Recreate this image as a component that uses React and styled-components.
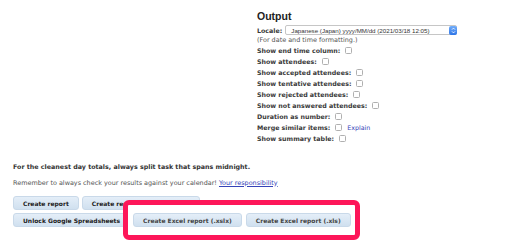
import React from "react";
import styled, { createGlobalStyle } from "styled-components";

const Global = createGlobalStyle`
  html, body { margin: 0; padding: 0; background: #fff; }
  body {
    font-family: "DejaVu Sans", Verdana, sans-serif;
    color: #333;
    width: 512px;
    height: 241px;
    overflow: hidden;
  }
`;

const Page = styled.div`
  padding-left: 13px;
`;

const Columns = styled.div`
  display: grid;
  grid-template-columns: 244px 1fr;
`;

const Section = styled.section`
  display: flex;
  flex-direction: column;
`;

const Title = styled.h3`
  margin: 10px 0 3px;
  font-family: "Liberation Sans", Arial, sans-serif;
  font-size: 10.5px;
  line-height: 12px;
  font-weight: 700;
  color: #222;
`;

const Row = styled.div`
  display: flex;
  align-items: center;
  gap: ${(p) => p.$gap ?? 5}px;
  height: ${(p) => p.$h ?? 11}px;
  font-size: 6.3px;
  font-weight: 700;
  color: #3a3a3a;
  white-space: nowrap;
`;

const Hint = styled.div`
  height: 10px;
  display: flex;
  align-items: center;
  font-size: 6.45px;
  font-weight: 400;
  color: #555;
`;

const Check = styled.input.attrs({ type: "checkbox" })`
  appearance: none;
  margin: 0;
  width: 7px;
  height: 7px;
  box-sizing: border-box;
  border: 1px solid #b0b0b0;
  border-radius: 1.5px;
  background: #fff;
`;

const Select = styled.div`
  display: flex;
  align-items: center;
  width: 172px;
  height: 10px;
  box-sizing: border-box;
  border: 1px solid #c6c6c6;
  border-radius: 2px;
  background: #fff;
  padding-left: 5px;
  font-family: "Liberation Sans", Arial, sans-serif;
  font-size: 6.2px;
  font-weight: 400;
  color: #333;
`;

const Stepper = styled.span`
  margin-left: auto;
  width: 8px;
  height: 9px;
  margin-right: -1px;
  border-radius: 2px;
  background: linear-gradient(#72aefa, #2c74e8);
  display: flex;
  align-items: center;
  justify-content: center;
`;

const Link = styled.a`
  color: #3543b8;
  font-weight: 400;
  text-decoration: ${(p) => (p.$underline ? "underline" : "none")};
  cursor: pointer;
`;

const Notes = styled.div`
  margin-top: 16.5px;
  display: flex;
  flex-direction: column;
`;

const Strong = styled.p`
  margin: 0;
  line-height: 11px;
  font-size: 6.35px;
  font-weight: 700;
  color: #333;
`;

const Muted = styled.p`
  margin: 6px 0 0;
  line-height: 11px;
  font-size: 6.45px;
  font-weight: 400;
  color: #555;
`;

const Buttons = styled.div`
  margin-top: 7.5px;
  display: flex;
  flex-direction: column;
  gap: 3px;
`;

const ButtonRow = styled.div`
  display: flex;
  align-items: center;
  gap: 3px;
`;

const Button = styled.button`
  height: 14px;
  padding: 0 9px;
  border: 1px solid #c9d9e9;
  border-radius: 3px;
  background: linear-gradient(#e4eef8, #d0e0ef);
  font-family: "DejaVu Sans", Verdana, sans-serif;
  font-size: 6px;
  font-weight: 700;
  color: ${(p) => (p.$soft ? "#444" : "#222")};
  white-space: nowrap;
  cursor: pointer;
`;

const Highlight = styled.div`
  position: relative;
  z-index: 1;
  display: flex;
  gap: 4px;

  &::before {
    content: "";
    position: absolute;
    top: -13px;
    left: -10px;
    right: -9px;
    bottom: -13px;
    border: 5px solid #fd1659;
    border-radius: 6px;
    background: #fff;
    z-index: -1;
  }
`;

const options = [
  { label: "Show end time column:" },
  { label: "Show attendees:" },
  { label: "Show accepted attendees:" },
  { label: "Show tentative attendees:" },
  { label: "Show rejected attendees:" },
  { label: "Show not answered attendees:" },
  { label: "Duration as number:" },
  { label: "Merge similar items:", link: "Explain" },
  { label: "Show summary table:" },
];

export default function App() {
  return (
    <Page>
      <Global />
      <Columns>
        <div />
        <Section>
          <Title>Output</Title>
          <Row $h={10} $gap={3}>
            Locale:
            <Select>
              Japanese (Japan) yyyy/MM/dd (2021/03/18 12:05)
              <Stepper>
                <svg width="5" height="7" viewBox="0 0 5 7">
                  <path d="M1 2.6 L2.5 1.1 L4 2.6 M1 4.4 L2.5 5.9 L4 4.4" fill="none" stroke="#fff" strokeWidth="0.9" />
                </svg>
              </Stepper>
            </Select>
          </Row>
          <Hint>(For date and time formatting.)</Hint>
          {options.map((o) => (
            <Row key={o.label}>
              {o.label}
              <Check />
              {o.link && <Link>{o.link}</Link>}
            </Row>
          ))}
        </Section>
      </Columns>
      <Notes>
        <Strong>For the cleanest day totals, always split task that spans midnight.</Strong>
        <Muted>
          Remember to always check your results against your calendar!{" "}
          <Link $underline>Your responsibility</Link>
        </Muted>
      </Notes>
      <Buttons>
        <ButtonRow>
          <Button>Create report</Button>
          <Button>Create report in new window</Button>
        </ButtonRow>
        <ButtonRow>
          <Button>Unlock Google Spreadsheets</Button>
          <Highlight>
            <Button $soft>Create Excel report (.xslx)</Button>
            <Button $soft>Create Excel report (.xls)</Button>
          </Highlight>
        </ButtonRow>
      </Buttons>
    </Page>
  );
}
